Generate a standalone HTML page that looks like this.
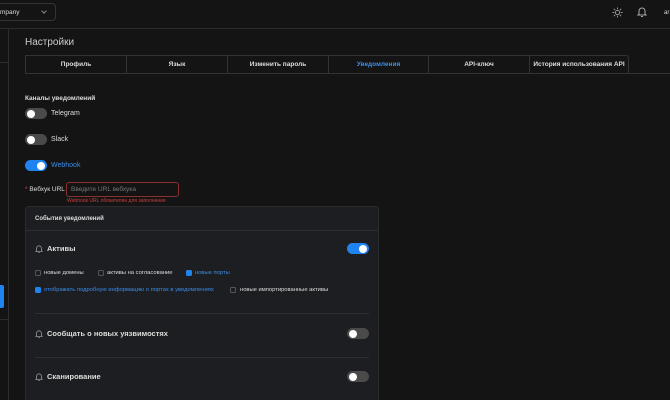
<!DOCTYPE html>
<html style="width:670px;height:400px;overflow:hidden"><head><meta charset="utf-8"><style>
*{box-sizing:border-box;margin:0;padding:0}
body{width:670px;height:400px;overflow:hidden;background:#141414;font-family:"Liberation Sans",sans-serif;color:#ddd;position:relative}
.a{position:absolute}
.t{font-size:7px;white-space:nowrap;line-height:10px}
.tg{position:absolute;width:22px;height:11px;border-radius:6px;background:#4a4a4a}
.tg::after{content:"";position:absolute;top:1.5px;left:2px;width:8px;height:8px;border-radius:50%;background:#fff}
.tg.on{background:#1f84f0}
.tg.on::after{left:12px}
.cb{position:absolute;width:6px;height:6px;border:1px solid #555;border-radius:1.5px}
.cb.on{background:#1f84f0;border-color:#1f84f0}
.tab{position:absolute;top:55px;height:18px;border-left:1px solid #333;border-top:1px solid #333;font-size:6.5px;font-weight:bold;color:#ddd;display:flex;align-items:center;justify-content:center}
</style></head><body>
<div class="a" style="left:0;top:28px;width:670px;height:1px;background:#2c2c2c"></div>
<div class="a" style="left:-10px;top:3px;width:66px;height:18px;border:1px solid #333;border-radius:4px"></div>
<div class="a t" style="left:0;top:8px;font-size:6.5px">mpany</div>
<div class="a" style="left:42px;top:9px;width:4px;height:4px;border-right:1px solid #888;border-bottom:1px solid #888;transform:rotate(45deg)"></div>
<svg class="a" style="left:612px;top:7px" width="11" height="11" viewBox="0 0 12 12" fill="none" stroke="#999" stroke-width="1"><circle cx="6" cy="6" r="2.3"/><path d="M6 0.5v2M6 9.5v2M0.5 6h2M9.5 6h2M2 2l1.4 1.4M8.6 8.6L10 10M2 10l1.4-1.4M8.6 3.4L10 2"/></svg>
<svg class="a" style="left:637px;top:6px" width="10" height="12" viewBox="0 0 10 12" fill="none" stroke="#aaa" stroke-width="1"><path d="M2 8V5a3 3 0 0 1 6 0v3l1 1H1z M4 10.5h2"/></svg>
<div class="a t" style="left:664px;top:8px;font-size:6px">ar</div>
<div class="a" style="left:8px;top:29px;width:1px;height:371px;background:#2c2c2c"></div>
<div class="a" style="left:0;top:62px;width:8px;height:1px;background:#2c2c2c"></div>
<div class="a" style="left:0;top:319px;width:8px;height:1px;background:#2c2c2c"></div>
<div class="a" style="left:0;top:285px;width:4px;height:23px;background:#1f84f0;border-radius:0 2px 2px 0"></div>
<div class="a" style="left:25px;top:37px;font-size:10px;color:#ccc">Настройки</div>
<div class="a" style="left:25px;top:73px;width:645px;height:1px;background:#333"></div>
<div class="tab" style="left:25px;width:101px">Профиль</div>
<div class="tab" style="left:126px;width:101px">Язык</div>
<div class="tab" style="left:227px;width:101px">Изменить пароль</div>
<div class="tab" style="left:328px;width:100px;color:#3c8ee8">Уведомления</div>
<div class="tab" style="left:428px;width:101px">API-ключ</div>
<div class="tab" style="left:529px;width:100px;border-right:1px solid #333;border-radius:0 3px 0 0">История использования API</div>
<div class="a t" style="left:25px;top:94px;font-weight:bold;font-size:6.5px">Каналы уведомлений</div>
<div class="tg" style="left:25px;top:108px"></div><div class="a t" style="left:51px;top:109px">Telegram</div>
<div class="tg" style="left:25px;top:134px"></div><div class="a t" style="left:51px;top:135px">Slack</div>
<div class="tg on" style="left:25px;top:160px"></div><div class="a t" style="left:51px;top:161px;color:#3c8ee8">Webhook</div>
<div class="a t" style="left:25px;top:185px;font-size:6.5px"><span style="color:#e04848">*</span> Вебхук URL</div>
<div class="a" style="left:66px;top:182px;width:113px;height:15px;border:1px solid #8a3030;border-radius:3px"></div>
<div class="a t" style="left:71px;top:185px;color:#777;font-size:6.5px">Введите URL вебхука</div>
<div class="a t" style="left:67px;top:196px;color:#c84040;font-size:5px">Webhook URL обязателен для заполнения</div>
<div class="a" style="left:25px;top:206px;width:354px;height:200px;background:#1d1e21;border:1px solid #2c2c2e;border-radius:4px"></div>
<div class="a t" style="left:35px;top:214px;font-size:6px;font-weight:bold">События уведомлений</div>
<div class="a" style="left:26px;top:230px;width:352px;height:1px;background:#2e2f33"></div>
<svg class="a" style="left:35px;top:244px" width="8" height="10" viewBox="0 0 10 12" fill="none" stroke="#999" stroke-width="1"><path d="M2 8V5a3 3 0 0 1 6 0v3l1 1H1z M4 10.5h2"/></svg>
<div class="a t" style="left:47px;top:244px;font-weight:bold;font-size:7.5px">Активы</div>
<div class="tg on" style="left:347px;top:243px"></div>
<div class="cb" style="left:35px;top:270px"></div><div class="a t" style="left:44px;top:268px;font-size:5.8px">новые домены</div>
<div class="cb" style="left:98px;top:270px"></div><div class="a t" style="left:107px;top:268px;font-size:5.8px">активы на согласование</div>
<div class="cb on" style="left:186px;top:270px"></div><div class="a t" style="left:195px;top:268px;font-size:5.8px;color:#3c8ee8">новые порты</div>
<div class="cb on" style="left:35px;top:287px"></div><div class="a t" style="left:44px;top:285px;font-size:5.8px;color:#3c8ee8">отображать подробную информацию о портах в уведомлениях</div>
<div class="cb" style="left:230px;top:287px"></div><div class="a t" style="left:240px;top:285px;font-size:5.8px">новые импортированные активы</div>
<div class="a" style="left:35px;top:313px;width:334px;height:1px;background:#2e2f33"></div>
<svg class="a" style="left:35px;top:329px" width="8" height="10" viewBox="0 0 10 12" fill="none" stroke="#999" stroke-width="1"><path d="M2 8V5a3 3 0 0 1 6 0v3l1 1H1z M4 10.5h2"/></svg>
<div class="a t" style="left:47px;top:329px;font-weight:bold;font-size:7.5px">Сообщать о новых уязвимостях</div>
<div class="tg" style="left:347px;top:328px"></div>
<div class="a" style="left:35px;top:357px;width:334px;height:1px;background:#2e2f33"></div>
<svg class="a" style="left:35px;top:372px" width="8" height="10" viewBox="0 0 10 12" fill="none" stroke="#999" stroke-width="1"><path d="M2 8V5a3 3 0 0 1 6 0v3l1 1H1z M4 10.5h2"/></svg>
<div class="a t" style="left:47px;top:372px;font-weight:bold;font-size:7.5px">Сканирование</div>
<div class="tg" style="left:347px;top:371px"></div>
</body></html>
